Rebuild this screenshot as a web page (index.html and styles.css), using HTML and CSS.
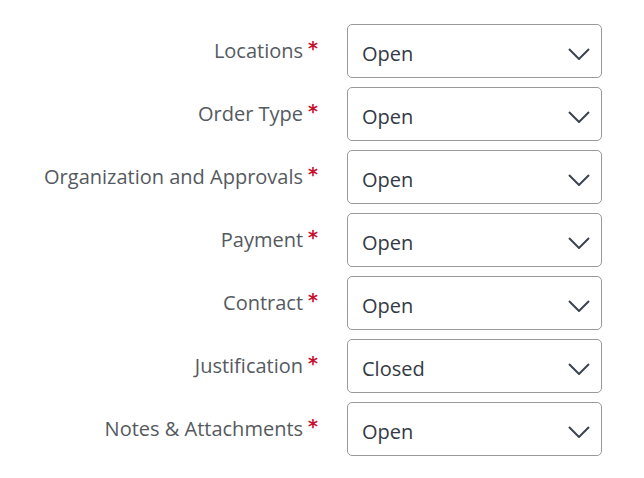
FILE: index.html
```html
<!DOCTYPE html>
<html lang="en">
<head>
    <meta charset="UTF-8">
    <title>Sections</title>
    <link rel="stylesheet" href="styles.css">
</head>
<body>
    <form class="sections">
        <label class="field-label">Locations <span class="req">*</span></label>
        <div class="select"><span>Open</span><svg viewBox="0 0 22 12"><path d="M1 1 L11 11 L21 1"/></svg></div>

        <label class="field-label">Order Type <span class="req">*</span></label>
        <div class="select"><span>Open</span><svg viewBox="0 0 22 12"><path d="M1 1 L11 11 L21 1"/></svg></div>

        <label class="field-label">Organization and Approvals <span class="req">*</span></label>
        <div class="select"><span>Open</span><svg viewBox="0 0 22 12"><path d="M1 1 L11 11 L21 1"/></svg></div>

        <label class="field-label">Payment <span class="req">*</span></label>
        <div class="select"><span>Open</span><svg viewBox="0 0 22 12"><path d="M1 1 L11 11 L21 1"/></svg></div>

        <label class="field-label">Contract <span class="req">*</span></label>
        <div class="select"><span>Open</span><svg viewBox="0 0 22 12"><path d="M1 1 L11 11 L21 1"/></svg></div>

        <label class="field-label">Justification <span class="req">*</span></label>
        <div class="select"><span>Closed</span><svg viewBox="0 0 22 12"><path d="M1 1 L11 11 L21 1"/></svg></div>

        <label class="field-label">Notes &amp; Attachments <span class="req">*</span></label>
        <div class="select"><span>Open</span><svg viewBox="0 0 22 12"><path d="M1 1 L11 11 L21 1"/></svg></div>
    </form>
</body>
</html>
```

FILE: styles.css
```css
body {
    margin: 0;
    background: #fff;
    font-family: 'Open Sans', sans-serif;
}

.sections {
    display: grid;
    grid-template-columns: 1fr 255px;
    column-gap: 29px;
    row-gap: 9px;
    padding: 24px 42px 0 0;
}

.field-label {
    display: flex;
    justify-content: flex-end;
    align-items: center;
    gap: 5px;
    font-size: 20px;
    color: #555a60;
    padding-bottom: 2px;
}

.req {
    color: #c8102e;
    font-family: 'DejaVu Sans', sans-serif;
    font-size: 19px;
    font-weight: 700;
    position: relative;
    top: -2px;
}

.select {
    height: 54px;
    box-sizing: border-box;
    border: 1px solid #999;
    border-radius: 5px;
    display: flex;
    align-items: center;
    justify-content: space-between;
    padding: 5px 11px 0 14px;
    font-size: 20px;
    color: #333a44;
}

.select svg {
    width: 22px;
    height: 12px;
    fill: none;
    stroke: #3c4450;
    stroke-width: 2;
}
```
